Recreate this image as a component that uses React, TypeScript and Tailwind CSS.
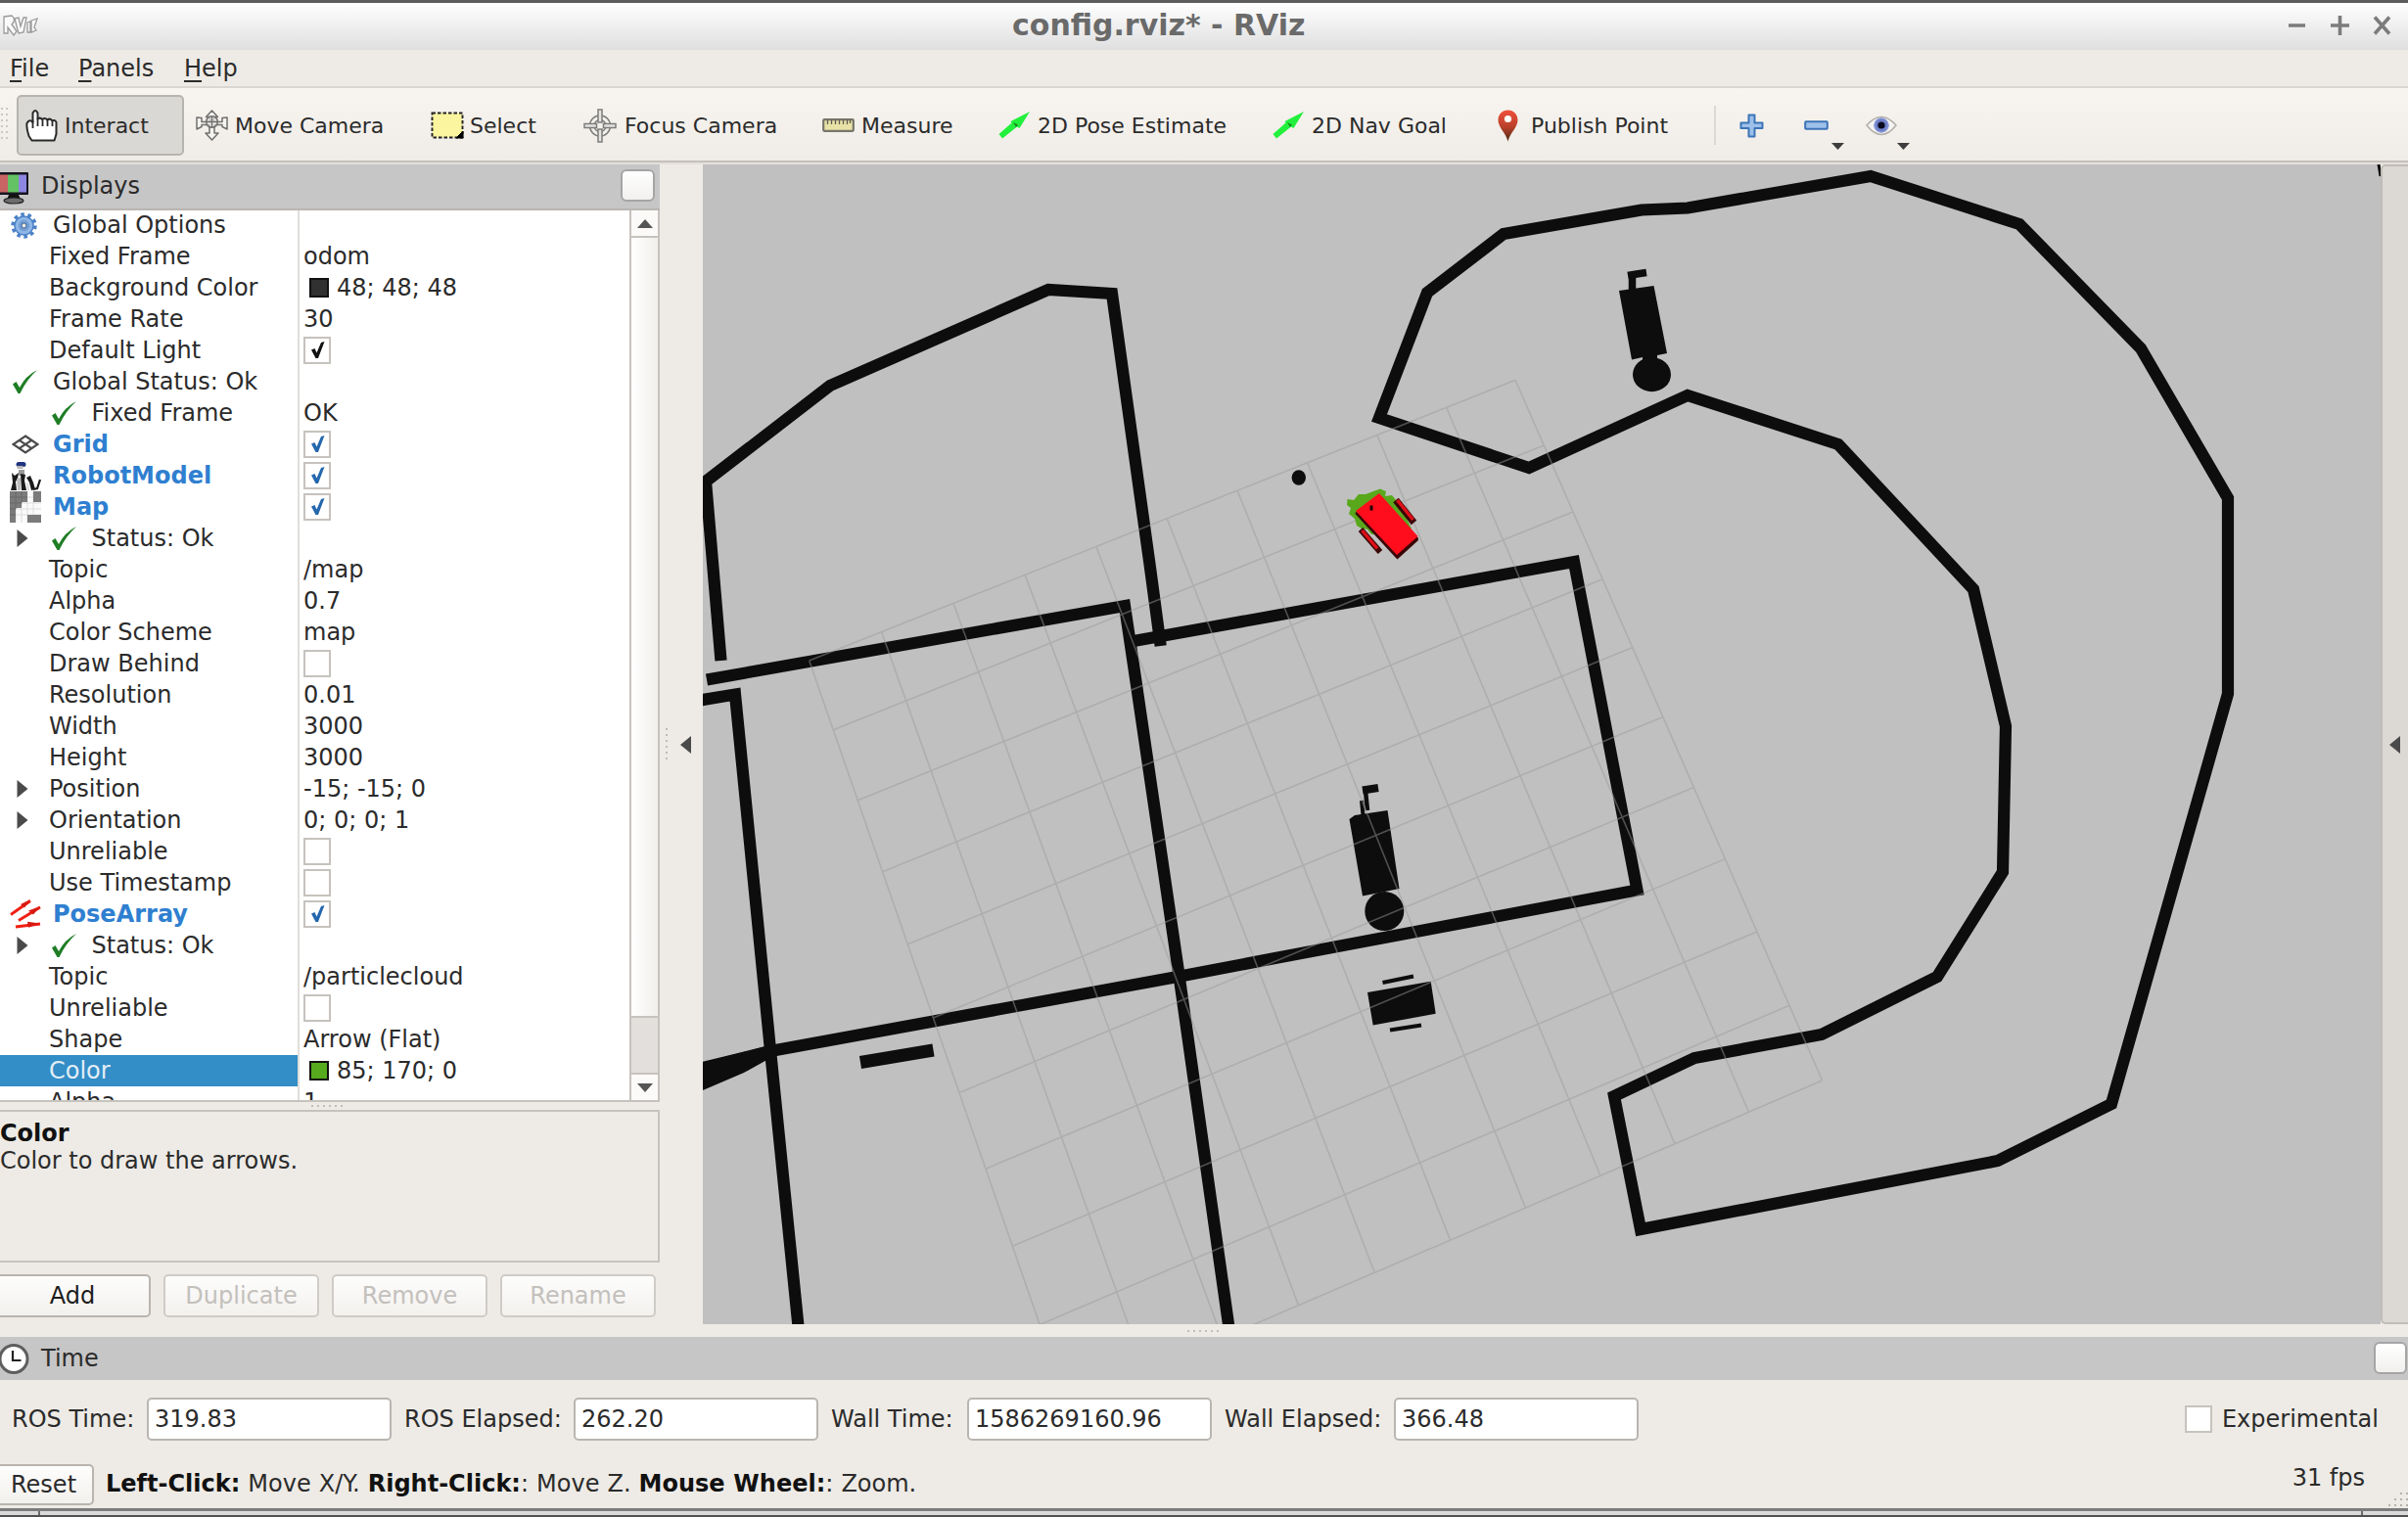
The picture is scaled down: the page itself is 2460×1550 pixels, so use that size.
import type { ReactNode } from "react";

type Point = [number, number];

const INK = "#0d0d0d";

/* ---------- small icons ---------- */

function GreenCheck() {
  return (
    <svg className="h-[26px] w-[27px]" viewBox="0 0 27 26">
      <path d="M1 15.5 L4.5 13 L8 19 Q14 7 26 1 Q15 11 8.5 25 L6.5 25 Z" fill="#1f7d25" />
    </svg>
  );
}

function GearIcon() {
  return (
    <svg className="h-[27px] w-[27px]" viewBox="0 0 27 27">
      <circle cx="13.5" cy="13.5" r="11.4" fill="none" stroke="#4a80c6" strokeWidth="3.6" strokeDasharray="3.6 3.56" />
      <circle cx="13.5" cy="13.5" r="9.6" fill="#8db6e6" stroke="#4a80c6" strokeWidth="1.5" />
      <circle cx="13.5" cy="13.5" r="5" fill="#7aa6dc" stroke="#6a94ca" strokeWidth="1" />
      <circle cx="13.5" cy="13.5" r="2.6" fill="#e9e6da" stroke="#4f77ab" strokeWidth="1.4" />
    </svg>
  );
}

function GridIcon() {
  return (
    <svg className="h-[20px] w-[28px]" viewBox="0 0 28 20">
      <path d="M14 1.5 L26.5 10 L14 18.5 L1.5 10 Z M7.7 5.8 L20.3 14.2 M20.3 5.8 L7.7 14.2" fill="none" stroke="#4a4a4a" strokeWidth="2.2" />
    </svg>
  );
}

function RobotIcon() {
  return (
    <svg className="h-[31px] w-[32px]" viewBox="0 0 32 31">
      <rect x="6.500" y="1" width="10" height="5" rx="2.500" fill="#22357f" />
      <rect x="7.500" y="5" width="6" height="3" fill="#b9b9b9" />
      <path d="M9 9h6v6H9z" fill="#9a9a9a" />
      <path d="M2 12 L5 15 L9 12 L8 18 L6 21 L7 30 L1 30 L3 22 Z M11 13 L16 14 L15 20 L17 30 L12 30 Z M17 17 L21 15 L24 22 L26 29 L22 30 L20 22 Z" fill="#1b1b1b" />
      <path d="M24 29 L28 28 L31 19" stroke="#1b1b1b" strokeWidth="2.200" fill="none" />
      <path d="M7 18 L11 17 L11 30 L8 30 Z" fill="#bdbdbd" />
      <path d="M17 22 L19 23 L20 30 L18 30 Z" fill="#d9d9d9" />
    </svg>
  );
}

function MapIcon() {
  return (
    <svg className="h-[32px] w-[32px]" viewBox="0 0 32 32">
      <rect width="32" height="32" fill="#fafafa" />
      <path d="M6 0V32M12 0V32M18 0V32M24 0V32M0 6H32M0 12H32M0 18H32M0 24H32" stroke="#dedede" strokeWidth="1" />
      <path d="M0 0H18V11H12V17H6V32H0Z M24 0H32V11H24Z M18 24H32V32H18Z" fill="#7b7b7b" />
      <path d="M6 0V18M12 0V12M0 6H18M0 12H12M0 18H6M0 24H6" stroke="#6a6a6a" strokeWidth="1" />
    </svg>
  );
}

function PoseArrayIcon() {
  return (
    <svg className="h-[30px] w-[32px]" viewBox="0 0 32 30">
      <g stroke="#f01f14" strokeWidth="2.800" fill="none">
        <path d="M1 15.500 L21 1.500" />
        <path d="M9 21.500 L31 8" />
        <path d="M6 28 L31 25" />
      </g>
      <g fill="#d81a12">
        <path d="M21 0 L15 8.500 L11 5 Z" />
        <path d="M31 7 L24 15.500 L19 11.500 Z" />
        <path d="M31 24.500 L19 28.800 L18 22.800 Z" />
      </g>
    </svg>
  );
}

function MonitorIcon() {
  return (
    <svg className="h-[34px] w-[30px]" viewBox="0 0 30 34">
      <path d="M9 24 H19 L21 29 H7 Z" fill="#111" />
      <ellipse cx="14" cy="30" rx="10" ry="3" fill="#6d6d6d" stroke="#222" strokeWidth="1.200" />
      <rect x="-6" y="1" width="35" height="23" rx="1" fill="#16141f" />
      <rect x="-3" y="3.500" width="11" height="18" fill="#c86464" />
      <rect x="8" y="3.500" width="11" height="18" fill="#63c263" />
      <rect x="19" y="3.500" width="8" height="18" fill="#8c86e2" />
    </svg>
  );
}

function ClockIcon() {
  return (
    <svg className="h-[33px] w-[30px]" viewBox="0 0 30 33">
      <circle cx="14" cy="16.500" r="14" fill="#fff" stroke="#5e5e5e" strokeWidth="3" />
      <path d="M13 8 V18 H21.500" fill="none" stroke="#222" strokeWidth="2.200" />
    </svg>
  );
}

function HandIcon() {
  return (
    <svg className="h-[34px] w-[33px]" viewBox="0 0 33 34">
      <path
        d="M7.500 14 V4.500 Q10 -0.500 12.500 4.500 V10.500 Q15 8.500 17 11 Q20 8.800 22.300 11.500 Q25 9.500 27.300 12.300 Q30.500 11 31.500 14 V26 L29.500 32.500 H6.500 L3.500 28 Q0.800 20 1.500 15 Q4 10 7.500 14 Z"
        fill="#fff"
        stroke="#2a2a2a"
        strokeWidth="2"
        strokeLinejoin="round"
      />
      <path d="M12.500 10 V18 M17.500 11 V18 M22.500 12 V18 M27.500 13 V18 M7.500 12 V20" stroke="#2a2a2a" strokeWidth="1.800" fill="none" />
    </svg>
  );
}

function MoveIcon() {
  return (
    <svg className="h-[32px] w-[33px]" viewBox="0 0 33 32">
      <g fill="#f6f4f0" stroke="#707070" strokeWidth="1.500" strokeLinejoin="round">
        <path d="M16.500 1 L22.500 7.500 H18.500 V12.500 H27 V8.500 L32 8 V20 L27 17.500 V15.500 H19 V24 H23 L16.500 31 L10 24 H14 V15.500 H6 V17.500 L1 20 V8 L6 8.500 V12.500 H14.500 V7.500 H10.500 Z" />
        <circle cx="16.500" cy="12.500" r="5.800" fillOpacity="0.600" />
        <path d="M10.700 12.500 H22.300 M16.500 6.700 V18.300" fill="none" />
      </g>
    </svg>
  );
}

function SelectIcon() {
  return (
    <svg className="h-[28px] w-[34px]" viewBox="0 0 34 28">
      <rect x="1.500" y="1.500" width="31" height="25" fill="#fbf5a0" stroke="#222" strokeWidth="1.900" strokeDasharray="3.500 2" />
      <path d="M33 20 V27 H26 Z" fill="#000" stroke="#000" />
    </svg>
  );
}

function FocusIcon() {
  return (
    <svg className="h-[35px] w-[34px]" viewBox="0 0 34 35">
      <g fill="none" stroke="#7d7d7d" strokeWidth="1.500">
        <circle cx="17" cy="17.500" r="10.500" />
        <circle cx="17" cy="17.500" r="6" />
        <path d="M15 1 H19 V14 H15 Z M15 21 H19 V34 H15 Z M1 15.500 H13.500 V19.500 H1 Z M20.500 15.500 H33 V19.500 H20.500 Z" fill="#e6e4e0" />
      </g>
    </svg>
  );
}

function RulerIcon() {
  return (
    <svg className="h-[14px] w-[33px]" viewBox="0 0 33 14">
      <rect x="1.200" y="1.200" width="30.600" height="11.600" rx="1" fill="#e9e2a6" stroke="#77756a" strokeWidth="2.200" />
      <path d="M5.500 2V6M9.500 2V6M13.500 2V6M17.500 2V6M21.500 2V6M25.500 2V6M28.500 2V5" stroke="#5d5b50" strokeWidth="1.300" />
    </svg>
  );
}

function GreenArrow() {
  return (
    <svg className="h-[28px] w-[33px]" viewBox="0 0 33 28">
      <path d="M0.500 23 L13.500 11.500 L12.500 10 L32 0 L21.500 17 L19 15.500 L4 27.500 Z" fill="#22f03c" />
      <path d="M15 11 L20 13.500 L18 16 Z" fill="#128a20" />
    </svg>
  );
}

function PinIcon() {
  return (
    <svg className="h-[33px] w-[21px]" viewBox="0 0 21 33">
      <defs>
        <linearGradient id="pin" x1="0" y1="0" x2="0" y2="1">
          <stop offset="0" stopColor="#f0503c" />
          <stop offset="0.550" stopColor="#b8402a" />
          <stop offset="1" stopColor="#4a2c14" />
        </linearGradient>
      </defs>
      <path d="M10.500 0.500 C16.500 0.500 20.500 5 20.500 11 C20.500 18 12.500 24 10.500 32.500 C8.500 24 0.500 18 0.500 11 C0.500 5 4.500 0.500 10.500 0.500 Z" fill="url(#pin)" />
      <circle cx="10.500" cy="9.500" r="3.600" fill="#fff" />
    </svg>
  );
}

function PlusIcon() {
  return (
    <svg className="h-[25px] w-[25px]" viewBox="0 0 25 25">
      <path d="M9.500 1.500 H15.500 V9.500 H23.500 V15 H15.500 V23.500 H9.500 V15 H1.500 V9.500 H9.500 Z" fill="#9dc0ea" stroke="#3c74b8" strokeWidth="2" strokeLinejoin="round" />
    </svg>
  );
}

function MinusIcon() {
  return (
    <svg className="h-[10px] w-[25px]" viewBox="0 0 25 10">
      <rect x="1.200" y="1.200" width="22.600" height="7.600" rx="0.800" fill="#9dc0ea" stroke="#3c74b8" strokeWidth="2" />
    </svg>
  );
}

function EyeIcon() {
  return (
    <svg className="h-[21px] w-[32px]" viewBox="0 0 32 21">
      <path d="M1 10 Q16 -7 31 10 Q16 29 1 10 Z" fill="#f4f4f2" stroke="#b3b0aa" strokeWidth="1.600" />
      <circle cx="16" cy="10" r="7.600" fill="#6f80c8" />
      <circle cx="16" cy="10" r="7" fill="none" stroke="#8fa0dc" strokeWidth="1.200" />
      <circle cx="16" cy="10" r="3.600" fill="#0a0a1e" />
    </svg>
  );
}

function DownTriangle() {
  return (
    <svg className="h-[7px] w-[13px]" viewBox="0 0 13 7">
      <path d="M0 0 H13 L6.500 7 Z" fill="#3d3d3d" />
    </svg>
  );
}

/* ---------- toolbar ---------- */

function Tool({ width, icon, slot, label }: { width: string; icon: ReactNode; slot: string; label: string }) {
  return (
    <div className={`flex shrink-0 items-center ${width}`}>
      <div className={`flex shrink-0 items-center ${slot}`}>{icon}</div>
      <span>{label}</span>
    </div>
  );
}

function Toolbar() {
  return (
    <div className="flex h-[78px] shrink-0 items-center border-b-2 border-[#e4e0db] bg-linear-to-b from-[#f8f5f0] to-[#efece7] text-[22px] shadow-[inset_0_-2px_0_#c5c0ba]">
      <div className="flex h-[36px] w-[17px] shrink-0 gap-[3px] pl-px">
        <div className="w-[2px] bg-[repeating-linear-gradient(#cbc7c1_0_2px,transparent_2px_6px)]" />
        <div className="w-[2px] bg-[repeating-linear-gradient(#cbc7c1_0_2px,transparent_2px_6px)]" />
      </div>
      <div className="mr-[12px] flex h-[62px] w-[171px] shrink-0 items-center rounded-[5px] border-2 border-[#b7b4af] bg-[#dad8d4] pl-[7px]">
        <div className="w-[40px]">
          <HandIcon />
        </div>
        <span>Interact</span>
      </div>
      <Tool width="w-[240px]" slot="w-[40px]" icon={<MoveIcon />} label="Move Camera" />
      <Tool width="w-[156px]" slot="w-[40px]" icon={<SelectIcon />} label="Select" />
      <Tool width="w-[244px]" slot="w-[42px]" icon={<FocusIcon />} label="Focus Camera" />
      <Tool width="w-[180px]" slot="w-[40px]" icon={<RulerIcon />} label="Measure" />
      <Tool width="w-[280px]" slot="w-[40px]" icon={<GreenArrow />} label="2D Pose Estimate" />
      <Tool width="w-[230px]" slot="w-[40px]" icon={<GreenArrow />} label="2D Nav Goal" />
      <Tool width="w-[221px]" slot="w-[34px]" icon={<PinIcon />} label="Publish Point" />
      <div className="h-[40px] w-[26px] border-l-2 border-[#dcd9d4]" />
      <div className="w-[66px]">
        <PlusIcon />
      </div>
      <div className="flex w-[63px] items-center">
        <MinusIcon />
        <div className="mt-[42px] ml-[3px]">
          <DownTriangle />
        </div>
      </div>
      <div className="flex items-center">
        <EyeIcon />
        <div className="mt-[42px]">
          <DownTriangle />
        </div>
      </div>
    </div>
  );
}

/* ---------- displays tree ---------- */

type Row = {
  label: string;
  kind?: "top" | "child" | "status";
  icon?: ReactNode;
  iconBox?: string;
  arrow?: boolean;
  bold?: boolean;
  value?: string;
  swatch?: string;
  check?: "on" | "off" | "blue";
  selected?: boolean;
};

const rows: Row[] = [
  { label: "Global Options", kind: "top", icon: <GearIcon />, iconBox: "pl-[11px]" },
  { label: "Fixed Frame", value: "odom" },
  { label: "Background Color", value: "48; 48; 48", swatch: "bg-[#303030]" },
  { label: "Frame Rate", value: "30" },
  { label: "Default Light", check: "on" },
  { label: "Global Status: Ok", kind: "top", icon: <GreenCheck />, iconBox: "pl-[12px]" },
  { label: "Fixed Frame", kind: "status", value: "OK" },
  { label: "Grid", kind: "top", bold: true, icon: <GridIcon />, iconBox: "pl-[12px]", check: "blue" },
  { label: "RobotModel", kind: "top", bold: true, icon: <RobotIcon />, iconBox: "pl-[10px]", check: "blue" },
  { label: "Map", kind: "top", bold: true, icon: <MapIcon />, iconBox: "pl-[10px]", check: "blue" },
  { label: "Status: Ok", kind: "status", arrow: true },
  { label: "Topic", value: "/map" },
  { label: "Alpha", value: "0.7" },
  { label: "Color Scheme", value: "map" },
  { label: "Draw Behind", check: "off" },
  { label: "Resolution", value: "0.01" },
  { label: "Width", value: "3000" },
  { label: "Height", value: "3000" },
  { label: "Position", value: "-15; -15; 0", arrow: true },
  { label: "Orientation", value: "0; 0; 0; 1", arrow: true },
  { label: "Unreliable", check: "off" },
  { label: "Use Timestamp", check: "off" },
  { label: "PoseArray", kind: "top", bold: true, icon: <PoseArrayIcon />, iconBox: "pl-[10px]", check: "blue" },
  { label: "Status: Ok", kind: "status", arrow: true },
  { label: "Topic", value: "/particlecloud" },
  { label: "Unreliable", check: "off" },
  { label: "Shape", value: "Arrow (Flat)" },
  { label: "Color", value: "85; 170; 0", swatch: "bg-[#55aa1e]", selected: true },
  { label: "Alpha", value: "1" },
];

function CheckBox({ state }: { state: "on" | "off" | "blue" }) {
  return (
    <div className="flex h-[28px] w-[28px] items-center justify-center border-2 border-[#c6c2bd] bg-white">
      {state !== "off" && (
        <svg className="h-[20px] w-[15px]" viewBox="0 0 15 20">
          <path d="M1 9.500 L4.500 8 L6.500 12.500 L11 2 L14.500 1 L8 18 H5.500 Z" fill={state === "on" ? "#111" : "#2467ae"} />
        </svg>
      )}
    </div>
  );
}

function TreeRow({ row }: { row: Row }) {
  return (
    <div className="flex h-[32px] shrink-0 items-center">
      <div className={`flex h-full w-[304px] shrink-0 items-center ${row.selected ? "bg-[#338dc6] text-[#e3eef6]" : ""}`}>
        {row.kind === "top" ? (
          <div className={`flex w-[54px] shrink-0 items-center ${row.iconBox}`}>{row.icon}</div>
        ) : (
          <div className="flex w-[50px] shrink-0 items-center pl-[17px]">
            {row.arrow && (
              <svg className="h-[18px] w-[12px]" viewBox="0 0 12 18">
                <path d="M0.500 0 L11.500 9 L0.500 18 Z" fill="#4a4a4a" />
              </svg>
            )}
          </div>
        )}
        {row.kind === "status" && (
          <div className="w-[43.500px] shrink-0 pl-[2px]">
            <GreenCheck />
          </div>
        )}
        <span className={`leading-[32px] whitespace-nowrap ${row.bold ? "font-bold text-[#2f7fd0]" : ""}`}>{row.label}</span>
      </div>
      <div className="flex h-full items-center border-l-2 border-[#e0dedb] pl-[4px]">
        {row.check && <CheckBox state={row.check} />}
        {row.swatch && <div className={`mr-[8px] ml-[6px] h-[20px] w-[20px] border-2 border-[#111] ${row.swatch}`} />}
        {row.value && <span className="leading-[32px] whitespace-nowrap">{row.value}</span>}
      </div>
    </div>
  );
}

function ScrollBar() {
  return (
    <div className="flex w-[31px] shrink-0 flex-col border-x-2 border-[#c6c2bd]">
      <div className="flex h-[28px] items-center justify-center border-b-2 border-[#c6c2bd] bg-[#fbfaf9]">
        <svg className="h-[9px] w-[16px]" viewBox="0 0 16 9">
          <path d="M0 9 L8 0 L16 9 Z" fill="#555" />
        </svg>
      </div>
      <div className="h-[797px] border-b-2 border-[#c6c2bd] bg-linear-to-r from-white to-[#f1efec]" />
      <div className="flex-1 bg-[#e3dfdc]" />
      <div className="flex h-[28px] items-center justify-center border-t-2 border-[#c6c2bd] bg-[#fbfaf9]">
        <svg className="h-[9px] w-[16px]" viewBox="0 0 16 9">
          <path d="M0 0 L8 9 L16 0 Z" fill="#555" />
        </svg>
      </div>
    </div>
  );
}

function PanelButton({ label, width, enabled }: { label: string; width: string; enabled?: boolean }) {
  return (
    <div
      className={`flex h-full items-center justify-center rounded-[5px] border-2 bg-linear-to-b from-[#fdfdfc] to-[#f3f1ee] ${width} ${
        enabled ? "rounded-l-none border-l-0 border-[#b9b4ae] pr-[4px] text-[#1c1c1c]" : "border-[#cfcbc6] text-[#c3c0bc]"
      }`}
    >
      {label}
    </div>
  );
}

function DisplaysPanel() {
  return (
    <div className="flex w-[674px] shrink-0 flex-col">
      <div className="flex h-[45px] shrink-0 items-center bg-[#c6c6c6]">
        <div className="w-[42px] pt-[3px]">
          <MonitorIcon />
        </div>
        <span className="flex-1 pb-px">Displays</span>
        <div className="mr-[5px] mb-[2px] h-[33px] w-[35px] rounded-[6px] border-2 border-[#a5a5a5] bg-linear-to-b from-white to-[#f1f0ee]" />
      </div>
      <div className="flex h-[913px] shrink-0 overflow-hidden border-y-2 border-t-[#bab6b2] border-b-[#c6c2bd] bg-white">
        <div className="-mt-px flex min-w-0 flex-1 flex-col">
          {rows.map((row, i) => (
            <TreeRow key={i} row={row} />
          ))}
        </div>
        <ScrollBar />
      </div>
      <div className="flex h-[8px] shrink-0 items-center pl-[318px]">
        <div className="h-[2px] w-[34px] bg-[repeating-linear-gradient(90deg,#c0bcb6_0_2px,transparent_2px_6px)]" />
      </div>
      <div className="h-[156px] shrink-0 border-2 border-l-0 border-[#c6c2bd] pt-[8px] leading-[28px]">
        <div className="font-bold text-[#111]">Color</div>
        <div>Color to draw the arrows.</div>
      </div>
      <div className="mt-[12px] flex h-[44px] gap-[13px]">
        <PanelButton label="Add" width="w-[154px]" enabled />
        <PanelButton label="Duplicate" width="w-[159px]" />
        <PanelButton label="Remove" width="w-[159px]" />
        <PanelButton label="Rename" width="w-[159px]" />
      </div>
    </div>
  );
}

/* ---------- 3D view ---------- */

const corners: [Point, Point, Point, Point] = [
  [826.7, 675],
  [1548, 388.3],
  [1861.6, 1104],
  [1090.5, 1435],
];

/** Projects a point of the unit square onto the ground grid seen by the camera. */
function project(u: number, v: number): Point {
  const [[x0, y0], [x1, y1], [x2, y2], [x3, y3]] = corners;
  const dx1 = x1 - x2;
  const dx2 = x3 - x2;
  const sx = x0 - x1 + x2 - x3;
  const dy1 = y1 - y2;
  const dy2 = y3 - y2;
  const sy = y0 - y1 + y2 - y3;
  const det = dx1 * dy2 - dx2 * dy1;
  const g = (sx * dy2 - dx2 * sy) / det;
  const h = (dx1 * sy - sx * dy1) / det;
  const w = g * u + h * v + 1;
  return [
    ((x1 - x0 + g * x1) * u + (x3 - x0 + h * x3) * v + x0) / w,
    ((y1 - y0 + g * y1) * u + (y3 - y0 + h * y3) * v + y0) / w,
  ];
}

const gridPath = Array.from({ length: 11 }, (_, i) => {
  const t = i / 10;
  const [a, b, c, d] = [project(t, 0), project(t, 1), project(0, t), project(1, t)];
  return `M${a} L${b} M${c} L${d}`;
}).join(" ");

const walls = [
  "M1409 427 L1458 299 L1536 239 L1677 214.500 L1724 212.500 L1911 180 L2063 229 L2187 356 L2276 509 L2276 709 L2157 1128 L2041 1186 L1676 1256 L1649 1120 L1731 1081 L1861 1057 L1979 998 L2046 891 L2049 742 L2016 602 L1878 454 L1724 404 L1562 478 Z",
  "M736.500 675 L721 492 L848 394 L1071 296 L1136 300 L1175 580 L1185.700 660",
  "M722 694.500 L1149 619 L1160 693 L1204 993 L1256 1360",
  "M1158 655 L1186 650 L1608 574 L1672.500 909.500 L1300 979.500 L1203 998 L787 1074 L710 1093",
  "M712 716 L751 709.500 L758 780 L787 1073 L816 1360",
];

function RenderView() {
  return (
    <svg className="h-[1185px] w-[1714px] shrink-0 bg-[#c0c0c0]" viewBox="718 168 1714 1185">
      <g fill="none" stroke={INK} strokeWidth="12.200" strokeLinejoin="miter">
        {walls.map((d) => (
          <path key={d} d={d} />
        ))}
        <path d="M879 1085.500 L953.500 1073" strokeWidth="13" />
        <path d="M1667.500 298 V280 M1663 281.500 L1672 280 L1682 278.500" strokeWidth="7.500" />
        <path d="M1392 807.500 L1408 805" strokeWidth="8" />
        <path d="M1395 808 L1397 828" strokeWidth="4.500" />
        <path d="M1391 818 L1392.500 833" strokeWidth="4" />
        <path d="M1412.500 1004 L1444 997.500 M1420 1052.500 L1452 1047.500" strokeWidth="4" />
        <path d="M2430 168 L2432 180" strokeWidth="3" />
      </g>
      <g fill={INK}>
        <path d="M718 1086 L790 1067 L787 1081 L760 1096 L718 1114 Z" />
        <path d="M1654 297 L1689.500 292 L1703 361 L1693 363 V369 H1678 V365 L1667 367.500 Z" />
        <ellipse cx="1687.500" cy="382.700" rx="19.500" ry="17.500" />
        <path d="M1378.500 837 L1384 833 L1417.500 828 L1429.500 908 L1392 915.500 Z" />
        <circle cx="1414.300" cy="931" r="20" />
        <path d="M1397 1014 L1461.700 1002.700 L1466.700 1035.700 L1402.700 1047.500 Z" />
        <ellipse cx="1326.800" cy="488" rx="7.200" ry="7.800" />
      </g>
      <path d={gridPath} fill="none" stroke="#9b9b9b" strokeOpacity="0.480" strokeWidth="1.600" />
      <path
        d="M1376.500 510 L1383 511 L1388 505 L1395 505 L1403 502 L1410 499.500 L1416 502 L1415 507 L1422 506 L1427 512 L1431 521 L1437 530 L1442 540 L1420 545 L1401 546 L1397 541 L1391 540 L1386 537 L1384 530 L1378 525 L1380 519 L1376 516 Z"
        fill="#59a81c"
      />
      <path d="M1426 511 L1444.500 534" stroke="#3a0505" strokeWidth="7" />
      <path d="M1427.500 511 L1443.500 531" stroke="#e01018" strokeWidth="3.500" />
      <path d="M1390 541 L1410 564" stroke="#3a0505" strokeWidth="6" />
      <path d="M1391.500 542 L1407 560.500" stroke="#e01018" strokeWidth="3.500" />
      <path d="M1385 523 L1448.500 549 L1449 552 L1427.500 571.500 L1425 569 L1384.500 525 Z" fill="#3a0505" />
      <path d="M1409 504 L1448.500 548 L1427 567 L1385 522 Z" fill="#ff0d1c" />
      <path d="M1401 516.500 V521.500" stroke="#1a0505" strokeWidth="3" />
    </svg>
  );
}

/* ---------- time panel & status ---------- */

function Field({ label, width, value }: { label: string; width: string; value: string }) {
  return (
    <div className="flex items-center">
      <span className={`shrink-0 whitespace-nowrap ${width}`}>{label}</span>
      <div className="flex h-[44px] w-[250px] items-center rounded-[5px] border-2 border-[#b9b6b2] bg-white pl-[6px]">{value}</div>
    </div>
  );
}

export default function App() {
  return (
    <div className="flex h-[1550px] w-[2460px] flex-col overflow-hidden bg-[#eeebe6] font-['DejaVu_Sans',sans-serif] text-[24px] text-[#2b2b2b]">
      <header className="flex h-[51px] shrink-0 items-center border-t-[3px] border-[#5c5c5c] bg-linear-to-b from-white to-[#dfdfdf] pb-[3px]">
        <div className="w-[1034px] pl-[3px]">
          <svg className="h-[22px] w-[36px]" viewBox="0 0 36 22">
            <g fill="#fafafa" stroke="#9a9a9a" strokeWidth="1.300">
              <path d="M1 2 L9 1 Q14 5 9 10 L14 17 L11 21 L5 13 L5 19 L1 19 Z" />
              <path d="M12 4 L16 3 L18 12 L21 3 L24 3 L21 18 L16 19 Z" />
              <path d="M25 8 L28 7 L28 18 L25 18 Z M29 6 L35 4 L32 13 L34 16 L29 18 Z" />
            </g>
          </svg>
        </div>
        <h1 className="w-[1304px] text-[30px] leading-[40px] font-bold whitespace-nowrap text-[#6a6a6a]">config.rviz* - RViz</h1>
        <svg className="h-[22px] w-[110px]" viewBox="0 0 110 22">
          <path d="M0 11 H17 M43 11 H62 M52.500 1 V21 M88 2.500 L103 19.500 M103 2.500 L88 19.500" stroke="#7c7c7c" strokeWidth="3.600" fill="none" />
        </svg>
      </header>

      <nav className="flex h-[39px] shrink-0 items-center border-b-2 border-[#dad6d1] pt-px pl-[10px]">
        <span className="w-[70px]">
          <u className="decoration-2 underline-offset-4">F</u>ile
        </span>
        <span className="w-[108px]">
          <u className="decoration-2 underline-offset-4">P</u>anels
        </span>
        <span>
          <u className="decoration-2 underline-offset-4">H</u>elp
        </span>
      </nav>

      <Toolbar />

      <main className="flex h-[1185px] shrink-0">
        <DisplaysPanel />
        <div className="flex w-[44px] shrink-0 items-center gap-[13px] pl-[6px]">
          <div className="h-[34px] w-[2px] bg-[repeating-linear-gradient(#c0bcb6_0_2px,transparent_2px_6px)]" />
          <svg className="h-[18px] w-[11px]" viewBox="0 0 11 18">
            <path d="M11 0 L0 9 L11 18 Z" fill="#4a4a4a" />
          </svg>
        </div>
        <RenderView />
        <div className="flex flex-1 items-center rounded-l-[5px] border-2 border-r-0 border-[#c0bcb7] bg-[#dcd9d4] pl-[7px]">
          <svg className="h-[18px] w-[11px]" viewBox="0 0 11 18">
            <path d="M11 0 L0 9 L11 18 Z" fill="#4a4a4a" />
          </svg>
        </div>
      </main>

      <div className="flex h-[13px] shrink-0 items-center justify-center">
        <div className="h-[2px] w-[34px] bg-[repeating-linear-gradient(90deg,#c0bcb6_0_2px,transparent_2px_6px)]" />
      </div>

      <div className="flex h-[44px] shrink-0 items-center bg-[#c6c6c6]">
        <div className="w-[42px] pt-px">
          <ClockIcon />
        </div>
        <span className="flex-1">Time</span>
        <div className="mr-px mb-px h-[33px] w-[34px] rounded-[6px] border-2 border-[#a5a5a5] bg-linear-to-b from-white to-[#f1f0ee]" />
      </div>

      <div className="flex h-[80px] shrink-0 items-center gap-[13px] pl-[12px]">
        <Field label="ROS Time:" width="w-[138px]" value="319.83" />
        <Field label="ROS Elapsed:" width="w-[173px]" value="262.20" />
        <Field label="Wall Time:" width="w-[139px]" value="1586269160.96" />
        <Field label="Wall Elapsed:" width="w-[173px]" value="366.48" />
        <div className="mr-[30px] ml-auto flex items-center">
          <div className="mr-[10px] h-[28px] w-[28px] border-2 border-[#c6c2bd] bg-white" />
          <span>Experimental</span>
        </div>
      </div>

      <footer className="flex h-[51px] shrink-0 items-start pt-[6px]">
        <div className="flex h-[42px] w-[96px] shrink-0 items-center rounded-r-[5px] border-2 border-l-0 border-[#b9b4ae] bg-linear-to-b from-[#fdfdfc] to-[#f3f1ee] pl-[11px]">
          Reset
        </div>
        <p className="flex-1 pl-[12px] leading-[40px] [word-spacing:0.400px]">
          <b className="text-[#111]">Left-Click:</b> Move X/Y. <b className="text-[#111]">Right-Click:</b>: Move Z. <b className="text-[#111]">Mouse Wheel:</b>: Zoom.
        </p>
        <span className="leading-[28px]">31 fps</span>
        <svg className="mt-[25px] ml-[22px] h-[20px] w-[22px]" viewBox="0 0 22 20">
          <path d="M2 17h2M8 17h2M14 17h2M20 17h2M8 11h2M14 11h2M20 11h2M14 5h2M20 5h2" stroke="#b5b1ab" strokeWidth="2" />
        </svg>
      </footer>

      <div className="flex h-[9px] shrink-0 border-t-[3px] border-b-2 border-t-[#7c7c7c] border-b-[#505050] bg-[#d9dbda]">
        <div className="w-[41px] border-r-2 border-[#6a6a6a]" />
        <div className="flex-1" />
        <div className="w-[48px] border-l-2 border-[#6a6a6a]" />
      </div>
    </div>
  );
}
